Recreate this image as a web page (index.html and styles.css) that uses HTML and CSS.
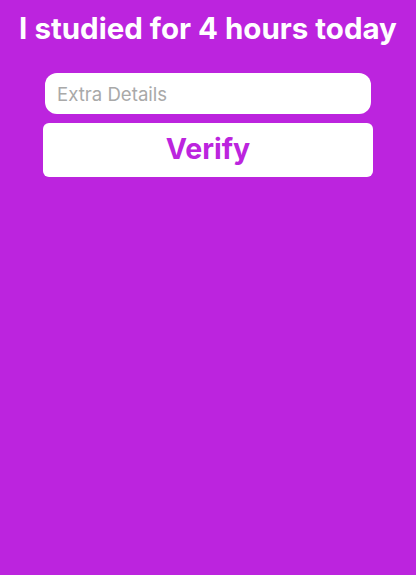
FILE: index.html
```html
<!DOCTYPE html>
<html>
<head>
<meta charset="utf-8">
<link rel="stylesheet" href="styles.css">
</head>
<body>
<div class="screen">
  <h1 class="title">I studied for 4 hours today</h1>
  <div class="form">
    <input class="field" type="text" placeholder="Extra Details">
    <button class="verify">Verify</button>
  </div>
</div>
</body>
</html>
```
FILE: styles.css
```css
html, body {
  margin: 0;
  padding: 0;
  background: #bc24de;
}
.screen {
  width: 416px;
  height: 575px;
  background: #bc24de;
  font-family: Inter, "Noto Sans", sans-serif;
  display: flex;
  flex-direction: column;
  align-items: center;
}
.title {
  margin: 10px 0 0 0;
  color: #fff;
  font-size: 29.5px;
  font-weight: 700;
  line-height: 36px;
  white-space: nowrap;
}
.form {
  margin-top: 27px;
  display: flex;
  flex-direction: column;
  align-items: center;
  gap: 9px;
}
.field {
  box-sizing: border-box;
  width: 326px;
  height: 41px;
  border: none;
  border-radius: 12px;
  background: #fff;
  padding: 0 12px;
  font-family: Inter, "Noto Sans", sans-serif;
  font-size: 18.6px;
  color: #222;
  outline: none;
}
.field::placeholder {
  color: #a9a9a9;
}
.verify {
  box-sizing: border-box;
  width: 330px;
  height: 54px;
  border: none;
  border-radius: 6px;
  background: #fff;
  color: #bc24de;
  font-family: Inter, "Noto Sans", sans-serif;
  font-size: 28.5px;
  font-weight: 700;
  padding: 0 0 3px 0;
}
```
